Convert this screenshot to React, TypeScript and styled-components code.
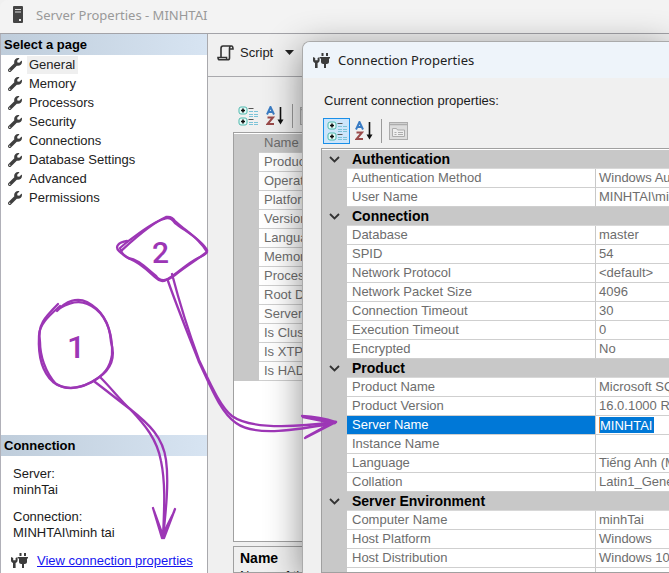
import React from "react";
import styled, { createGlobalStyle, css } from "styled-components";
import { FaWrench } from "react-icons/fa";

const Global = createGlobalStyle`
  * { box-sizing: border-box; }
  body { margin: 0; overflow: hidden; background: #f0f0f0; }
  body, button, input { font-family: "Liberation Sans", Arial, sans-serif; font-size: 13px; }
`;

const Window = styled.div`
  position: relative;
  display: flex;
  flex-direction: column;
  height: 100vh;
  overflow: hidden;
  background: #f0f0f0;
  color: #1a1a1a;
`;

const TitleBar = styled.header`
  flex: none;
  display: flex;
  align-items: center;
  gap: 12px;
  height: 33px;
  padding: 0 12px 4px;
  background: #f3f3f3;
  border-radius: 8px 0 0 0;
`;

const WindowTitle = styled.h1<{ $muted?: boolean }>`
  margin: 0;
  font: 400 13px/18px "Noto Sans", "Segoe UI", sans-serif;
  color: ${(p) => (p.$muted ? "#999" : "#222")};
  white-space: nowrap;
`;

const Body = styled.div`
  flex: 1;
  min-height: 0;
  display: grid;
  grid-template-columns: 208px 1fr;
  border-top: 1px solid #a3a3a8;
`;

const Sidebar = styled.aside`
  display: flex;
  flex-direction: column;
  background: #fff;
  border-left: 1px solid #b0b0b8;
  border-right: 1px solid #a9a9ad;
`;

const SectionTitle = styled.h2`
  margin: 0;
  height: 21px;
  padding-left: 3px;
  font-size: 13px;
  line-height: 21px;
  color: #000;
  background: linear-gradient(90deg, #bfcddb, #d7e4f2);
`;

const PageList = styled.ul`
  flex: 1;
  margin: 0;
  padding: 0;
  list-style: none;
`;

const PageItem = styled.button<{ $active?: boolean }>`
  display: flex;
  align-items: center;
  gap: 5px;
  height: 19px;
  padding: 0 7px;
  border: 0;
  background: none;
  color: #222;
  svg { color: #3f3f3f; }
  span {
    padding: 0 3px 0 2px;
    line-height: 18px;
    background: ${(p) => (p.$active ? "#efefef" : "none")};
  }
`;

const ConnectionInfo = styled.dl`
  margin: 0;
  padding: 10px 12px 0;
  line-height: 16px;
  dd { margin: 0 0 11px; }
  dd:last-child { margin: 0; }
`;

const LinkRow = styled.div`
  display: flex;
  align-items: center;
  gap: 9px;
  padding: 6px 10px 0;
  height: 32px;
  a { color: #1414f0; text-decoration: underline; white-space: nowrap; }
`;

const Main = styled.main`
  display: flex;
  flex-direction: column;
  min-width: 0;
  min-height: 0;
`;

const CommandBar = styled.div`
  flex: none;
  display: flex;
  height: 43px;
  padding: 0 9px 5px;
  border-bottom: 1px solid #a9a9ad;
`;

const ScriptButton = styled.button`
  display: flex;
  align-items: center;
  gap: 6px;
  padding: 0;
  border: 0;
  background: none;
  color: #222;
`;

const ScriptCaret = styled.svg`
  margin-left: 6px;
`;

const Content = styled.div`
  flex: 1;
  min-height: 0;
  display: flex;
  flex-direction: column;
  padding: 26px 0 0 25px;
`;

const GridTools = styled.div`
  flex: none;
  display: flex;
  align-items: center;
  height: 26px;
`;

const ToolButton = styled.button<{ $pressed?: boolean }>`
  display: flex;
  align-items: center;
  justify-content: center;
  width: 27px;
  height: 26px;
  padding: 0;
  border: 1px solid ${(p) => (p.$pressed ? "#1a8fe8" : "transparent")};
  background: ${(p) => (p.$pressed ? "#cce5fb" : "none")};
`;

const ToolDivider = styled.span`
  width: 1px;
  height: 24px;
  margin: 0 3px 0 4px;
  background: #9a9a9a;
`;

const GridPane = styled.div`
  flex: 1;
  min-height: 0;
  overflow: hidden;
  padding-top: 1px;
  border: 1px solid #a0a0a0;
  border-right: 0;
  background: #fff;
`;

const HelpPane = styled.div`
  flex: none;
  height: 27px;
  margin-top: 4px;
  padding: 3px 6px;
  overflow: hidden;
  border: 1px solid #a0a0a0;
  line-height: 17px;
  strong { display: block; font-size: 14px; color: #000; }
`;

const PropertyTable = styled.table`
  width: 100%;
  table-layout: fixed;
  border-collapse: separate;
  border-spacing: 0;
  color: #6d6d6d;
`;

const GutterCol = styled.col`
  width: 25px;
`;

const NameCol = styled.col<{ $narrow?: boolean }>`
  width: ${(p) => (p.$narrow ? "60px" : "248px")};
`;

const rowHeight = css`
  height: 19px;
  padding: 0;
  line-height: 18px;
  overflow: hidden;
  white-space: nowrap;
  text-align: left;
`;

const Gutter = styled.td`
  ${rowHeight}
  background: #c8c8c8;
`;

const CategoryCell = styled.th`
  ${rowHeight}
  padding-left: 5px;
  background: #c8c8c8;
  border-bottom: 1px solid #d8d8d8;
  font-size: 14px;
  color: #000;
`;

const NameCell = styled.th<{ $selected?: boolean; $shaded?: boolean }>`
  ${rowHeight}
  padding-left: 5px;
  font-weight: 400;
  border-bottom: 1px solid #cfcfcf;
  background: ${(p) => (p.$selected ? "#0078d7" : p.$shaded ? "#c8c8c8" : "#fff")};
  color: ${(p) => (p.$selected ? "#fff" : "inherit")};
`;

const ValueCell = styled.td`
  ${rowHeight}
  padding-left: 3px;
  border-left: 1px solid #c8c8c8;
  border-bottom: 1px solid #cfcfcf;
  background: #fff;
`;

const ValueInput = styled.input`
  display: block;
  width: 55px;
  height: 16px;
  padding: 0;
  border: 0;
  border-left: 1px solid #e88a3a;
  outline: 0;
  background: #0078d7;
  color: #fff;
`;

const Toggle = styled.button`
  display: flex;
  align-items: center;
  justify-content: center;
  width: 25px;
  height: 18px;
  padding: 0;
  border: 0;
  background: none;
`;

const Dialog = styled.section`
  position: absolute;
  top: 41px;
  right: 0;
  bottom: 0;
  left: 302px;
  display: flex;
  flex-direction: column;
  overflow: hidden;
  background: #f0f0f0;
  border: 1px solid #aaa;
  border-width: 1px 0 0 1px;
  border-radius: 8px 0 0 0;
  box-shadow: 0 8px 36px rgba(0, 0, 0, 0.45);
`;

const DialogTitle = styled.header`
  flex: none;
  display: flex;
  align-items: center;
  gap: 8px;
  height: 36px;
  padding: 0 10px;
  background: #eef4fa;
`;

const DialogBody = styled.div`
  flex: 1;
  min-height: 0;
  display: flex;
  flex-direction: column;
  padding: 14px 0 0 18px;
`;

const Caption = styled.p`
  margin: 0 0 9px;
  padding-left: 3px;
  line-height: 17px;
`;

const DialogTools = styled(GridTools)`
  padding-left: 2px;
  margin-bottom: 4px;
`;

const MainTools = styled(GridTools)`
  padding-left: 1px;
  margin-bottom: 3px;
`;

const Annotations = styled.svg`
  position: absolute;
  top: 0;
  left: 0;
  pointer-events: none;
  text { font-family: Roboto, sans-serif; font-weight: 500; fill: #9c36b5; }
`;

const ServerIcon = () => (
  <svg width="12" height="17" viewBox="0 0 12 17" aria-hidden="true">
    <rect x="1" y="0" width="10" height="17" rx="1" fill="#444" />
    <path d="M3 3.5h6M3 6h6" stroke="#ddd" />
    <rect x="7" y="13" width="2" height="2" fill="#eee" />
  </svg>
);

const PlugIcon = () => (
  <svg width="17" height="17" viewBox="0 0 17 17" aria-hidden="true" fill="#3c3c3c">
    <path d="M0 5v3.2c0 1.4.8 2.2 2 2.8v5h2.6v-5c1.2-.6 2-1.4 2-2.8V5L4.600 6v2.300H2.200V6z" />
    <path d="M8.500 1h2v3h-2zM13 1h2v3h-2zM7 5h10v1.500h-1v3.200c0 1.300-1 2.300-2.300 2.300h-.7v4h-2v-4h-.7C9 12 8 11 8 9.700V6.500H7z" />
  </svg>
);

const ScriptIcon = () => (
  <svg width="17" height="16" viewBox="0 0 17 16" aria-hidden="true" fill="none" stroke="#333" strokeWidth="1.600">
    <path d="M12.500 3.500V13c0 1-.6 1.800-1.800 1.800H2.500C1.300 14.800 1 14 1 12.500h8.500c0 1.500.4 2.300 1.200 2.300M4 12V3.500C4 2 4.700 1 6 1h8.500c1 0 1.500.8 1.500 3h-3.500c0-1.500.3-3 1.500-3" />
  </svg>
);

const CategorizedIcon = () => (
  <svg width="20" height="20" viewBox="0 0 20 20" aria-hidden="true" fill="none">
    <rect x="1" y="1" width="8" height="7" rx="2" fill="#e4fbf8" stroke="#4fb9ae" />
    <rect x="1" y="12" width="8" height="7" rx="2" fill="#e4fbf8" stroke="#4fb9ae" />
    <path d="M3 4.500h4M5 2.500v4M3 15.500h4M5 13.500v4" stroke="#111" strokeWidth="1.600" />
    <path d="M10.500 2.500h5M10.500 13.500h5" stroke="#555" />
    <path d="M11 5.500h4M16 5.500h4M11 8.500h4M16 8.500h4M11 10.500h4M16 10.500h4M11 16.500h4M16 16.500h4M11 18.500h4M16 18.500h4" stroke="#7cc3d8" />
  </svg>
);

const SortIcon = () => (
  <svg width="18" height="20" viewBox="0 0 18 20" aria-hidden="true" fill="none">
    <path d="M1 8.500 4.500 1 8 8.500M2.500 6h4" stroke="#3a7cc4" strokeWidth="2" />
    <path d="M1.500 11.500h5.500L1.500 18h6.500" stroke="#9a4a4a" strokeWidth="2" />
    <path d="M14.500 1v14" stroke="#111" strokeWidth="1.600" />
    <path d="M11.500 13.500h6l-3 5z" fill="#111" />
  </svg>
);

const PagesIcon = () => (
  <svg width="19" height="18" viewBox="0 0 19 18" aria-hidden="true" fill="none" stroke="#acacac">
    <rect x=".5" y=".5" width="18" height="17" fill="#dcdcdc" />
    <path d="M1 2.500h17" strokeWidth="1.500" />
    <path d="M3.500 14.500v-8h4l1 1.500h7v6.500z" fill="#eee" />
    <path d="M5.500 10.500h2M9 10.500h5M5.500 12.500h2M9 12.500h5" />
  </svg>
);

const ChevronIcon = () => (
  <svg width="11" height="7" viewBox="0 0 11 7" aria-hidden="true">
    <path d="M1 1l4.500 4.500L10 1" fill="none" stroke="#333" strokeWidth="1.800" />
  </svg>
);

const pages = ["General", "Memory", "Processors", "Security", "Connections", "Database Settings", "Advanced", "Permissions"];

const serverProperties = [
  "Name", "Product", "Operating System", "Platform", "Version", "Language", "Memory",
  "Processors", "Root Directory", "Server Collation", "Is Clustered", "Is XTP Supported", "Is HADR Enabled",
];

const categories: { title: string; rows: [string, string][] }[] = [
  { title: "Authentication", rows: [["Authentication Method", "Windows Authentication"], ["User Name", "MINHTAI\\minh tai"]] },
  {
    title: "Connection",
    rows: [
      ["Database", "master"], ["SPID", "54"], ["Network Protocol", "<default>"], ["Network Packet Size", "4096"],
      ["Connection Timeout", "30"], ["Execution Timeout", "0"], ["Encrypted", "No"],
    ],
  },
  {
    title: "Product",
    rows: [
      ["Product Name", "Microsoft SQL Server"], ["Product Version", "16.0.1000 RTM"], ["Server Name", "MINHTAI"],
      ["Instance Name", ""], ["Language", "Tiếng Anh (Mỹ)"], ["Collation", "Latin1_General"],
    ],
  },
  {
    title: "Server Environment",
    rows: [["Computer Name", "minhTai"], ["Host Platform", "Windows"], ["Host Distribution", "Windows 10"], ["Host Release", "10.0"]],
  },
];

const GridToolButtons = ({ pressed }: { pressed?: boolean }) => (
  <>
    <ToolButton $pressed={pressed} aria-label="Categorized"><CategorizedIcon /></ToolButton>
    <ToolButton aria-label="Alphabetical"><SortIcon /></ToolButton>
    <ToolDivider />
    <ToolButton aria-label="Property pages" disabled><PagesIcon /></ToolButton>
  </>
);

export default function App() {
  return (
    <Window>
      <Global />
      <TitleBar>
        <ServerIcon />
        <WindowTitle $muted>Server Properties - MINHTAI</WindowTitle>
      </TitleBar>
      <Body>
        <Sidebar>
          <SectionTitle>Select a page</SectionTitle>
          <PageList>
            {pages.map((page, i) => (
              <li key={page}>
                <PageItem $active={i === 0}>
                  <FaWrench size={14} />
                  <span>{page}</span>
                </PageItem>
              </li>
            ))}
          </PageList>
          <SectionTitle>Connection</SectionTitle>
          <ConnectionInfo>
            <dt>Server:</dt>
            <dd>minhTai</dd>
            <dt>Connection:</dt>
            <dd>MINHTAI\minh tai</dd>
          </ConnectionInfo>
          <LinkRow>
            <PlugIcon />
            <a href="#connection-properties">View connection properties</a>
          </LinkRow>
        </Sidebar>
        <Main>
          <CommandBar>
            <ScriptButton>
              <ScriptIcon />
              Script
              <ScriptCaret width="9" height="5" viewBox="0 0 9 5" aria-hidden="true">
                <path d="M0 0h9L4.500 5z" fill="#222" />
              </ScriptCaret>
            </ScriptButton>
          </CommandBar>
          <Content>
            <MainTools><GridToolButtons /></MainTools>
            <GridPane>
              <PropertyTable>
                <colgroup><GutterCol /><NameCol $narrow /><col /></colgroup>
                <tbody>
                  {serverProperties.map((name, i) => (
                    <tr key={name}>
                      <Gutter />
                      <NameCell scope="row" $shaded={i === 0}>{name}</NameCell>
                      <ValueCell />
                    </tr>
                  ))}
                </tbody>
              </PropertyTable>
            </GridPane>
            <HelpPane>
              <strong>Name</strong>
              Name of the server
            </HelpPane>
          </Content>
        </Main>
      </Body>

      <Dialog id="connection-properties" aria-label="Connection Properties">
        <DialogTitle>
          <PlugIcon />
          <WindowTitle as="h2">Connection Properties</WindowTitle>
        </DialogTitle>
        <DialogBody>
          <Caption>Current connection properties:</Caption>
          <DialogTools><GridToolButtons pressed /></DialogTools>
          <GridPane>
            <PropertyTable>
              <colgroup><GutterCol /><NameCol /><col /></colgroup>
              {categories.map(({ title, rows }) => (
                <tbody key={title}>
                  <tr>
                    <Gutter><Toggle aria-label={"Collapse " + title}><ChevronIcon /></Toggle></Gutter>
                    <CategoryCell colSpan={2} scope="rowgroup">{title}</CategoryCell>
                  </tr>
                  {rows.map(([name, value]) => (
                    <tr key={name}>
                      <Gutter />
                      <NameCell scope="row" $selected={name === "Server Name"}>{name}</NameCell>
                      <ValueCell>
                        {name === "Server Name" ? <ValueInput aria-label={name} defaultValue={value} /> : value}
                      </ValueCell>
                    </tr>
                  ))}
                </tbody>
              ))}
            </PropertyTable>
          </GridPane>
        </DialogBody>
      </Dialog>

      <Annotations width="669" height="573" viewBox="0 0 669 573" fill="none" stroke="#9c36b5" strokeWidth="2.300" strokeLinecap="round" strokeLinejoin="round">
        <path d="M60 306C50 315 39 324 39 336C38 355 42 372 53 382C65 391 80 388 92 382C104 375 110 368 112 355C113 335 107 318 96 309C84 300 74 300 60 308" />
        <path d="M57 311C66 301 77 297 87 302C104 311 110 327 111 342C116 358 110 370 98 378C85 387 70 392 56 384C45 372 40 355 40 342C37 325 45 317 58 304" />
        <path d="M127 242C137 235 152 222 164 219Q170 216 175 223C185 231 201 239 207 250Q208 254 198 258C186 264 176 275 166 280Q161 283 156 278C148 271 139 262 130 259C124 255 114 250 118 245Q120 242 127 241" />
        <path d="M121 251C132 241 150 224 166 217Q172 216 175 221C187 232 199 238 207 252C198 259 186 266 175 275Q162 285 156 276C146 268 138 259 128 258Q122 255 120 248L127 242" />
        <path d="M95 382C107 391 118 400 130 409C149 424 163 437 166 460C169 482 166 510 163 538" />
        <path d="M101 378C112 389 120 400 130 409C145 425 157 439 161 461C166 485 164 512 163 538M153 508L162 538M154 511L163 536M175 509L164 538M174 512L162 536" />
        <path d="M172 274C178 297 188 330 199 360C211 385 220 406 232 416C250 429 290 428 336 422" />
        <path d="M168 281C176 304 188 334 199 362C210 385 220 412 236 423C255 437 297 430 335 423M302 416Q320 417 336 422M303 417L333 423M305 438L336 422M306 437L330 424" />
        <text stroke="none" x="152" y="263" fontSize="30">2</text>
        <text stroke="none" x="67" y="358" fontSize="32">1</text>
      </Annotations>
    </Window>
  );
}
